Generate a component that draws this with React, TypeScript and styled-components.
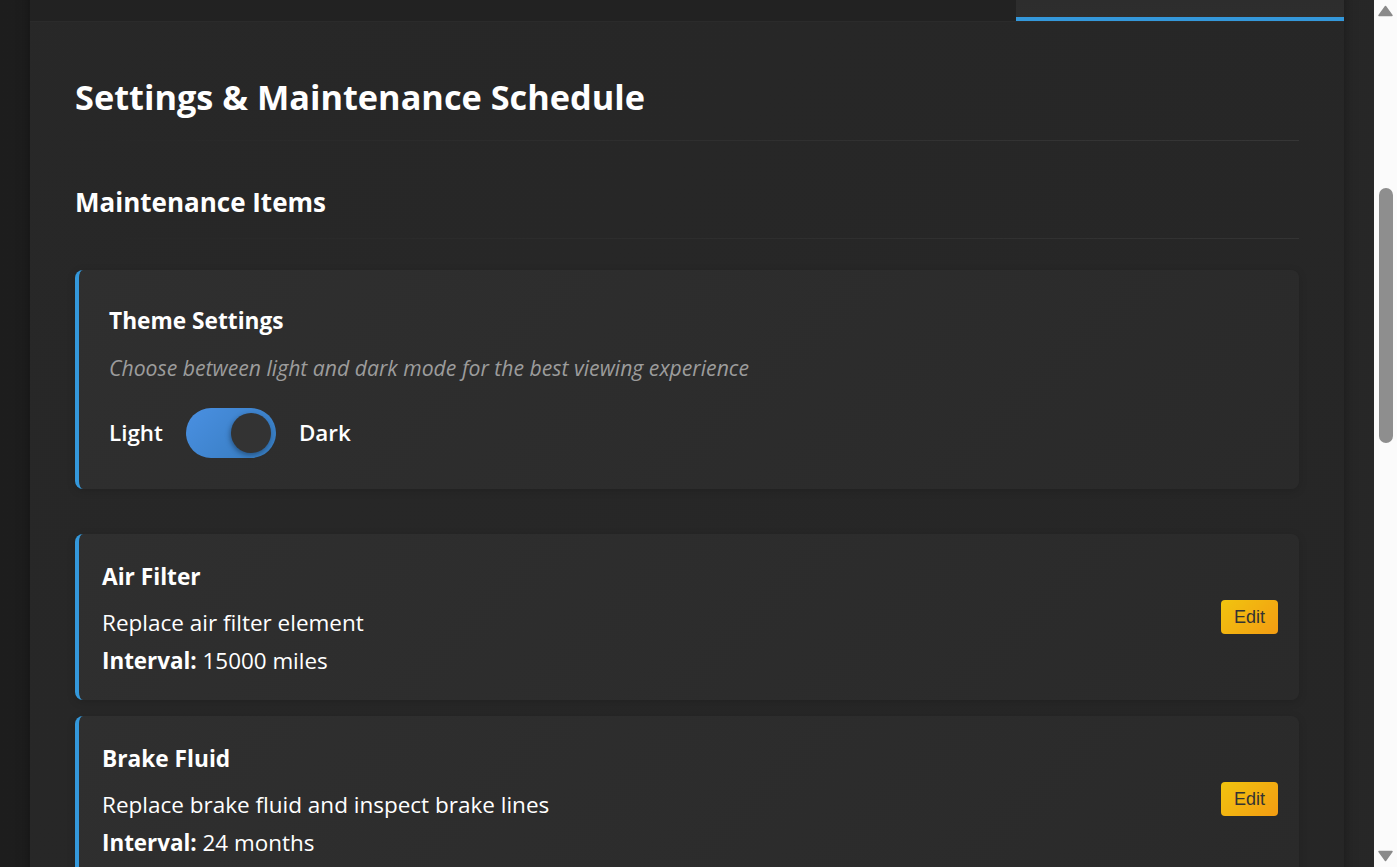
import React, { useLayoutEffect, useRef, useState } from "react";
import styled, { createGlobalStyle } from "styled-components";

const RAIL_WIDTH = 23;
const ARROW_SPACE = 17;

const GlobalStyle = createGlobalStyle`
  html, body { margin: 0; padding: 0; }
  body {
    padding-right: ${RAIL_WIDTH}px;
    background: linear-gradient(90deg, #1d1d1d 0%, #272727 100%);
    color: #ffffff;
    font-family: "Open Sans", "Noto Sans", "DejaVu Sans", sans-serif;
  }
  * { box-sizing: border-box; }
`;

/* Browser-like vertical scrollbar drawn over the right edge */
const ScrollRail = styled.div`
  position: fixed;
  top: 0;
  right: 0;
  bottom: 0;
  width: ${RAIL_WIDTH}px;
  background: #fbfbfb;
  z-index: 10;
`;

const ScrollArrow = styled.svg<{ $down?: boolean }>`
  position: absolute;
  left: 3px;
  width: 17px;
  height: 12px;
  ${(p) => (p.$down ? "bottom: 5px;" : "top: 5px;")}
`;

const ScrollThumb = styled.div`
  position: absolute;
  left: 5px;
  width: 14px;
  border-radius: 7px;
  background: #8e8e8e;
`;

const Page = styled.div`
  padding: 30px;
`;

const Container = styled.div`
  background: linear-gradient(135deg, #282828 0%, #252525 100%);
  box-shadow: 0 0 12px rgba(0, 0, 0, 0.35);
`;

const Header = styled.header`
  padding: 45px 45px 37px;
`;

const AppTitle = styled.h1`
  margin: 0;
  font-size: 40px;
  line-height: 48px;
  font-weight: 700;
`;

const AppSubtitle = styled.p`
  margin: 12px 0 0;
  font-size: 18px;
  line-height: 26px;
  color: #9a9a9a;
`;

const StatGrid = styled.div`
  margin-top: 40px;
  display: grid;
  grid-template-columns: repeat(4, 1fr);
  grid-auto-rows: 140px;
  gap: 20px;
`;

const StatCard = styled.div`
  background: #2e2e2e;
  border-radius: 8px;
  padding: 24px;
  display: flex;
  flex-direction: column;
  gap: 8px;
`;

const StatLabel = styled.span`
  font-size: 15px;
  color: #9a9a9a;
`;

const StatValue = styled.span`
  font-size: 30px;
  font-weight: 700;
`;

const TabBar = styled.nav`
  display: grid;
  grid-template-columns: repeat(4, 1fr);
  background: #222222;
  border-bottom: 1px solid #2b2b2b;
`;

const Tab = styled.button<{ $active?: boolean }>`
  border: none;
  padding: 22px 10px 18px;
  font-family: inherit;
  font-size: 18px;
  line-height: 20px;
  font-weight: 600;
  color: ${(p) => (p.$active ? "#ffffff" : "#9a9a9a")};
  background: ${(p) =>
    p.$active ? "linear-gradient(180deg, #2a2a2a 0%, #2e2e2e 100%)" : "transparent"};
  border-bottom: 4px solid ${(p) => (p.$active ? "#3498db" : "transparent")};
  cursor: pointer;
`;

const Content = styled.main`
  padding: 54px 45px 65px 45px;
`;

const PageTitle = styled.h2`
  margin: 0;
  padding-bottom: 23px;
  font-size: 34.3px;
  line-height: 42px;
  font-weight: 700;
  background: linear-gradient(90deg, rgba(255, 255, 255, 0) 0%, rgba(255, 255, 255, 0.07) 100%) bottom / 100% 1px no-repeat;
`;

const SectionTitle = styled.h3`
  margin: 46px 0 31px;
  padding-bottom: 22px;
  font-size: 26px;
  line-height: 30px;
  font-weight: 700;
  background: linear-gradient(90deg, rgba(255, 255, 255, 0) 0%, rgba(255, 255, 255, 0.06) 100%) bottom / 100% 1px no-repeat;
`;

const Card = styled.section`
  background: linear-gradient(135deg, #2f2f2f 0%, #2a2a2a 100%);
  border-left: 4px solid #3498db;
  border-radius: 8px;
  box-shadow: 0 2px 8px rgba(0, 0, 0, 0.15);
`;

const ThemeCard = styled(Card)`
  padding: 37px 30px 31px;
  margin-bottom: 45px;
`;

const CardTitle = styled.h4`
  margin: 0;
  font-size: 22.7px;
  line-height: 28px;
  font-weight: 700;
`;

const ItemTitle = styled(CardTitle)`
  margin-top: 6px;
`;

const ThemeDesc = styled.p`
  margin: 19px 0 0;
  font-size: 21.2px;
  line-height: 28px;
  font-style: italic;
  color: #9c9c9c;
`;

const ToggleRow = styled.div`
  margin-top: 26px;
  display: flex;
  align-items: center;
  gap: 23px;
`;

const ToggleLabel = styled.span`
  font-size: 22.4px;
  line-height: 28px;
  font-weight: 600;
`;

const Track = styled.button<{ $on: boolean }>`
  position: relative;
  width: 90px;
  height: 50px;
  border: none;
  border-radius: 25px;
  padding: 0;
  cursor: pointer;
  background: ${(p) =>
    p.$on ? "linear-gradient(135deg, #4a90e2 0%, #357abd 100%)" : "#cccccc"};
`;

const Knob = styled.span<{ $on: boolean }>`
  position: absolute;
  top: 5px;
  left: ${(p) => (p.$on ? "45px" : "5px")};
  width: 40px;
  height: 40px;
  border-radius: 50%;
  background: #333333;
  box-shadow: -1px 2px 5px rgba(0, 0, 0, 0.35);
`;

const ItemList = styled.div`
  display: flex;
  flex-direction: column;
  gap: 16px;
`;

const ItemCard = styled(Card)`
  padding: 23px 21px 23px 23px;
  display: flex;
  align-items: center;
  justify-content: space-between;
  gap: 20px;
`;

const ItemBody = styled.div`
  display: flex;
  flex-direction: column;
`;

const ItemDesc = styled.p`
  margin: 16px 0 0;
  font-size: 22.5px;
  line-height: 32px;
`;

const ItemInterval = styled.p`
  margin: 6px 0 0;
  font-size: 22.4px;
  line-height: 32px;
  strong { font-weight: 700; }
`;

const EditButton = styled.button`
  border: none;
  border-radius: 4px;
  padding: 6px 13px;
  font-family: "Liberation Sans", Arial, sans-serif;
  font-size: 18px;
  line-height: 22px;
  color: #333333;
  background: linear-gradient(135deg, #f1c40f 0%, #f39c12 100%);
  cursor: pointer;
`;

type Item = { name: string; desc: string; interval: string };

const items: Item[] = [
  { name: "Air Filter", desc: "Replace air filter element", interval: "15000 miles" },
  { name: "Brake Fluid", desc: "Replace brake fluid and inspect brake lines", interval: "24 months" },
  { name: "Oil Change", desc: "Replace engine oil and oil filter", interval: "5000 miles" },
  { name: "Tire Rotation", desc: "Rotate tires to ensure even wear", interval: "7500 miles" },
  { name: "Coolant Flush", desc: "Drain and refill engine coolant", interval: "30000 miles" },
  { name: "Spark Plugs", desc: "Replace spark plugs", interval: "60000 miles" },
  { name: "Transmission Fluid", desc: "Replace transmission fluid", interval: "60000 miles" },
  { name: "Battery Check", desc: "Test battery and clean terminals", interval: "12 months" },
  { name: "Wiper Blades", desc: "Replace windshield wiper blades", interval: "12 months" },
];

const stats = [
  ["Total Services", "24"],
  ["Upcoming", "3"],
  ["Overdue", "1"],
  ["Total Spent", "$2,480"],
  ["Current Mileage", "48,250"],
  ["Last Service", "Mar 12"],
  ["Next Due", "Apr 30"],
  ["Vehicles", "2"],
];

type Thumb = { top: number; height: number };

function useScrollThumb(): Thumb {
  const [thumb, setThumb] = useState<Thumb>({ top: ARROW_SPACE, height: 0 });
  useLayoutEffect(() => {
    const update = () => {
      const doc = document.documentElement;
      const view = window.innerHeight;
      const total = Math.max(doc.scrollHeight, view);
      const track = view - ARROW_SPACE * 2;
      setThumb({
        top: ARROW_SPACE + (window.scrollY / total) * track,
        height: (view / total) * track,
      });
    };
    update();
    window.addEventListener("scroll", update);
    window.addEventListener("resize", update);
    return () => {
      window.removeEventListener("scroll", update);
      window.removeEventListener("resize", update);
    };
  }, []);
  return thumb;
}

function Scrollbar() {
  const thumb = useScrollThumb();
  return (
    <ScrollRail aria-hidden="true">
      <ScrollArrow viewBox="0 0 17 12">
        <path d="M8.5 1.5 L15 10.5 L2 10.5 Z" fill="#8a8a8a" stroke="#8a8a8a" strokeWidth="1.5" strokeLinejoin="round" />
      </ScrollArrow>
      <ScrollThumb style={{ top: thumb.top, height: thumb.height }} />
      <ScrollArrow $down viewBox="0 0 17 12">
        <path d="M2 1.5 L15 1.5 L8.5 10.5 Z" fill="#8a8a8a" stroke="#8a8a8a" strokeWidth="1.5" strokeLinejoin="round" />
      </ScrollArrow>
    </ScrollRail>
  );
}

export default function App() {
  const [dark, setDark] = useState(true);
  const tabRef = useRef<HTMLElement>(null);

  useLayoutEffect(() => {
    const el = tabRef.current;
    if (!el) return;
    const bottom = el.getBoundingClientRect().bottom + window.scrollY;
    window.scrollTo(0, bottom - 22);
  }, []);

  return (
    <>
      <GlobalStyle />
      <Page>
        <Container>
          <Header>
            <AppTitle>Vehicle Maintenance Tracker</AppTitle>
            <AppSubtitle>Keep your vehicle in top shape with scheduled maintenance</AppSubtitle>
            <StatGrid>
              {stats.map(([label, value]) => (
                <StatCard key={label}>
                  <StatLabel>{label}</StatLabel>
                  <StatValue>{value}</StatValue>
                </StatCard>
              ))}
            </StatGrid>
          </Header>
          <TabBar ref={tabRef}>
            <Tab>Dashboard</Tab>
            <Tab>Service Log</Tab>
            <Tab>Reminders</Tab>
            <Tab $active>Settings</Tab>
          </TabBar>
          <Content>
            <PageTitle>Settings &amp; Maintenance Schedule</PageTitle>
            <SectionTitle>Maintenance Items</SectionTitle>
            <ThemeCard>
              <CardTitle>Theme Settings</CardTitle>
              <ThemeDesc>Choose between light and dark mode for the best viewing experience</ThemeDesc>
              <ToggleRow>
                <ToggleLabel>Light</ToggleLabel>
                <Track $on={dark} onClick={() => setDark((d) => !d)} aria-label="Toggle theme">
                  <Knob $on={dark} />
                </Track>
                <ToggleLabel>Dark</ToggleLabel>
              </ToggleRow>
            </ThemeCard>
            <ItemList>
              {items.map((it) => (
                <ItemCard key={it.name}>
                  <ItemBody>
                    <ItemTitle>{it.name}</ItemTitle>
                    <ItemDesc>{it.desc}</ItemDesc>
                    <ItemInterval>
                      <strong>Interval:</strong> {it.interval}
                    </ItemInterval>
                  </ItemBody>
                  <EditButton>Edit</EditButton>
                </ItemCard>
              ))}
            </ItemList>
          </Content>
        </Container>
      </Page>
      <Scrollbar />
    </>
  );
}
